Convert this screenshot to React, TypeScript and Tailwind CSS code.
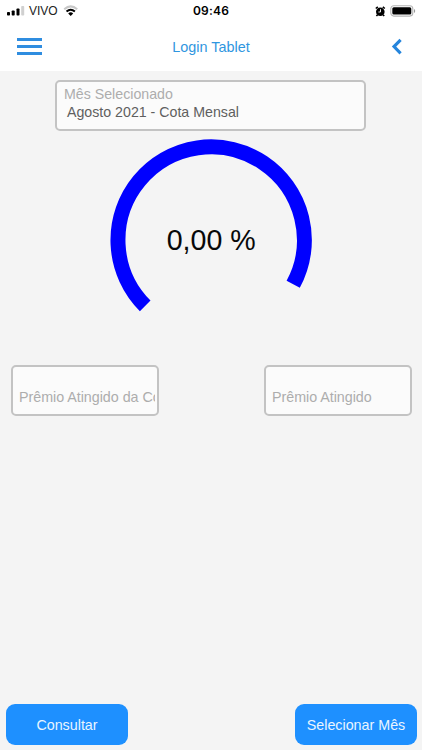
import React from "react";

function StatusBar() {
  return (
    <div className="grid h-[22px] grid-cols-3 items-center">
      <div className="flex h-full items-center pl-[7px]">
        <svg width="18" height="10" viewBox="0 0 18 10">
          <rect x="0" y="6" width="3" height="3.6" rx="0.8" fill="#000" />
          <rect x="4.7" y="4.4" width="3" height="5.2" rx="0.8" fill="#000" />
          <rect x="9.5" y="2.4" width="3" height="7.2" rx="0.8" fill="#000" />
          <rect x="14.2" y="0" width="3" height="9.6" rx="0.8" fill="#d0d0d0" />
        </svg>
        <span className="ml-[4px] text-[12px] text-[#222]">VIVO</span>
        <svg className="ml-[5px]" width="16" height="12" viewBox="0 0 16 12" fill="none">
          <path d="M1.2 4.2Q7.7 -1.5 14.2 4.2" stroke="#c8c8c8" strokeWidth="2" />
          <path d="M3.5 6.5Q7.7 2.9 11.9 6.5" stroke="#000" strokeWidth="2" />
          <path d="M5.2 8.4Q7.7 6.2 10.2 8.4L7.7 10.9Z" fill="#000" />
        </svg>
      </div>
      <div className="text-center text-[12px] leading-[22px] font-semibold tracking-[0.2px] text-black font-['Inter',sans-serif]">09:46</div>
      <div className="flex items-center justify-end pr-[6px]">
        <svg width="11" height="11" viewBox="0 0 11 11">
          <circle cx="5.3" cy="5.7" r="4.3" fill="#000" />
          <path d="M0.8 2.5L2.8 0.9M9.8 2.5L7.8 0.9M2.6 8.7L1.4 10.1M8 8.7L9.2 10.1" stroke="#000" strokeWidth="1.6" />
          <path d="M5.5 3.2V6H3.4" stroke="#fff" strokeWidth="0.9" fill="none" />
        </svg>
        <svg className="ml-[4px]" width="26" height="12" viewBox="0 0 26 12">
          <rect x="0.8" y="0.7" width="22" height="10.4" rx="3" fill="#fff" stroke="#b4b4b4" strokeWidth="1.1" />
          <rect x="2.3" y="2.2" width="19" height="7.4" rx="1.5" fill="#000" />
          <path d="M24 4V8Q25.2 7.4 25.2 6T24 4Z" fill="#999" />
        </svg>
      </div>
    </div>
  );
}

function Header() {
  return (
    <header className="h-[71px] bg-white">
      <StatusBar />
      <div className="grid h-[49px] grid-cols-3 items-center">
        <button className="ml-[17px] flex w-[25px] flex-col gap-[4px]" aria-label="Menu">
          <span className="h-[3px] w-full bg-[#2f8de0]" />
          <span className="h-[3px] w-full bg-[#2f8de0]" />
          <span className="h-[3px] w-full bg-[#2f8de0]" />
        </button>
        <h1 className="text-center text-[14.4px] leading-[20px] whitespace-nowrap text-[#2f96e0]">Login Tablet</h1>
        <button className="mr-[19px] justify-self-end" aria-label="Voltar">
          <svg width="12" height="18" viewBox="0 0 12 18" fill="none">
            <path d="M9.6 1.8L3 8.6L9.6 15.4" stroke="#2585dc" strokeWidth="3.1" />
          </svg>
        </button>
      </div>
    </header>
  );
}

function Field({ label }: { label: string }) {
  return (
    <div className="flex h-[51px] w-[148px] items-end rounded-[5px] border-2 border-[#c3c3c3] bg-[#fbfbfb] pr-[2px] pb-[7px] pl-[6px]">
      <span className="w-full overflow-hidden text-[14.3px] leading-[20px] tracking-[-0.03px] whitespace-nowrap text-[#adadad]">{label}</span>
    </div>
  );
}

function Gauge() {
  return (
    <svg className="mt-[4px] ml-[106px]" width="210" height="184" viewBox="106 135 210 184">
      <path d="M145.2 305.9A93.2 93.2 0 1 1 293.2 284.3" fill="none" stroke="#0000ff" strokeWidth="15" />
      <text x="211.2" y="250" textAnchor="middle" fontSize="28.6" fill="#080808">
        0,00 %
      </text>
    </svg>
  );
}

export default function App() {
  return (
    <div className="flex h-[750px] w-[422px] flex-col overflow-hidden bg-[#f4f4f4] font-['Liberation_Sans',Arial,sans-serif]">
      <Header />
      <main className="flex flex-1 flex-col">
        <div className="mt-[9px] ml-[55px] h-[51px] w-[311px] rounded-[5px] border-2 border-[#c3c3c3] bg-[#fbfbfb] pt-[3px] pl-[7px] text-[14.2px] leading-[18px]">
          <div className="text-[#adadad]">Mês Selecionado</div>
          <div className="pl-[3px] text-[#5f5f5f]">Agosto 2021 - Cota Mensal</div>
        </div>
        <Gauge />
        <div className="mt-[46px] flex justify-between pr-[10px] pl-[11px]">
          <Field label="Prêmio Atingido da Cota" />
          <Field label="Prêmio Atingido" />
        </div>
      </main>
      <footer className="flex justify-between px-[6px] pr-[5px] pb-[5px] text-[14.3px] text-[#e9f5ff]">
        <button className="h-[41px] w-[122px] rounded-[9px] bg-[#1e90ff] pt-[3px]">Consultar</button>
        <button className="h-[41px] w-[122px] rounded-[9px] bg-[#1e90ff] pt-[3px] whitespace-nowrap">Selecionar Mês</button>
      </footer>
    </div>
  );
}
